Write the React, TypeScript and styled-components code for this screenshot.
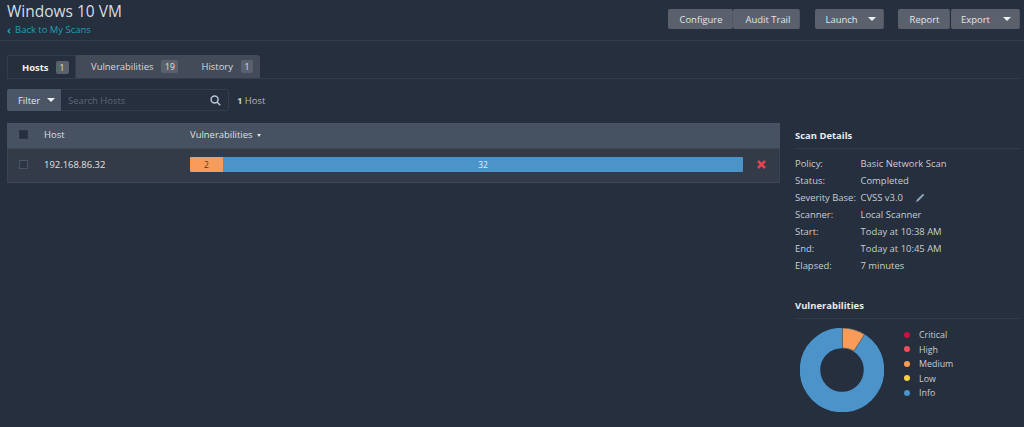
import React from "react";
import styled, { createGlobalStyle } from "styled-components";

const Global = createGlobalStyle`
  html, body { margin: 0; padding: 0; background: #252f3e; }
  body { font-family: "Open Sans", "Liberation Sans", sans-serif; color: #d5d9de; font-size: 9.45px; overflow: hidden; }
  * { box-sizing: border-box; }
`;
const Page = styled.div`width: 1024px; height: 427px; overflow: hidden; background: #252f3e;`;
const Header = styled.header`
  height: 41px; border-bottom: 1px solid #333d4c; padding: 0 4px 0 7px;
  display: flex; justify-content: space-between; align-items: flex-start;
`;
const TitleBlock = styled.div`display: flex; flex-direction: column;`;
const Title = styled.h1`margin: 0; font-size: 15.5px; font-weight: 400; line-height: 23px; color: #d8dce0;`;
const Back = styled.a`font-size: 9.45px; line-height: 14px; color: #1f9fb5; display: flex; align-items: center; gap: 4px;`;
const BackArrow = styled.span`font-weight: 700; font-size: 11px; line-height: 12px;`;
const Actions = styled.div`display: flex; margin-top: 9px; gap: 15px;`;
const Group = styled.div<{ $gap?: number }>`display: flex; gap: ${p => p.$gap ?? 0}px; &:last-child { margin-left: -1px; }`;
const Btn = styled.button<{ $w: number; $pl?: number; $gap?: number }>`
  width: ${p => p.$w}px; height: 20px; border: 0; padding: 0 0 0 ${p => p.$pl ?? 0}px; background: #5a606c; color: #e3e5e8;
  font: 400 9.45px "Open Sans", sans-serif; display: flex; align-items: center; justify-content: center; gap: ${p => p.$gap ?? 9}px;
  border-right: 1px solid #505662; border-radius: 2px;
`;
const Caret = styled.i`width: 0; height: 0; border: 4px solid transparent; border-top: 4px solid #eef0f2; border-bottom: 0; display: block;`;
const Main = styled.div`padding: 14px 4px 0 7px; display: flex; flex-direction: column;`;
const Tabs = styled.div`display: flex; height: 24px; border-bottom: 1px solid #333d4c; width: 1013px;`;
const Tab = styled.div<{ $w: number }>`
  width: ${p => p.$w}px; height: 23px; display: flex; align-items: center; gap: 7px; padding-left: 14px;
  background: #252f3e; font-weight: 700; color: #f0f1f3;
  border: 1px solid #333d4c; border-bottom: 0; border-radius: 2px 0 0 0;
`;
const TabRest = styled.div`
  width: 184px; height: 23px; background: #444b58; display: flex; align-items: center; padding-left: 15px; border-radius: 0 3px 0 0; color: #d5d9de;
`;
const TabLabel = styled.span<{ $ml?: number }>`margin-left: ${p => p.$ml ?? 0}px;`;
const Badge = styled.span<{ $w: number; $ml?: number }>`
  width: ${p => p.$w}px; height: 13px; margin-left: ${p => p.$ml ?? 0}px; background: #5a606c; border-radius: 2px; font-size: 8.5px; font-weight: 400;
  display: flex; align-items: center; justify-content: center; color: #dfe1e4;
`;
const FilterRow = styled.div`display: flex; align-items: center; margin-top: 10px; height: 22px;`;
const FilterBox = styled.div`
  display: flex; width: 222px; height: 22px; border: 1px solid #333d4c; border-radius: 2px; align-items: stretch;
`;
const FilterBtn = styled.div`
  width: 54px; background: #4a5666; color: #e2e5e8; display: flex; align-items: center; gap: 7px; padding-left: 11px; margin: -1px 0 -1px -1px; border-radius: 2px 0 0 2px;
`;
const Search = styled.div`
  flex: 1; display: flex; align-items: center; justify-content: space-between; padding: 0 7px 0 7px; color: #5f6874;
`;
const Count = styled.div`margin-left: 8px; color: #b3b8bf; b { color: #c6cace; }`;
const Body = styled.div`display: flex; margin-top: 12px; align-items: flex-start;`;
const Table = styled.div`width: 773px; border-bottom: 1px solid #3d4857;`;
const HeadRow = styled.div`
  height: 26px; background: #465261; border-bottom: 1px solid #3d4857; display: flex; align-items: center; color: #dde0e3; padding-bottom: 2px;
`;
const Row = styled.div`height: 33px; background: #333b49; display: flex; align-items: center; border-left: 1px solid #3a4453; border-right: 1px solid #3a4453; color: #e0e3e6; padding-bottom: 3px;`;
const Check = styled.span<{ $dark?: boolean }>`
  width: 9px; height: 9px; margin-left: ${p => p.$dark ? 12 : 11}px; display: block; flex: none; background: ${p => p.$dark ? "#252f3e" : "#2c3544"}; border: 1px solid ${p => p.$dark ? "#2c3544" : "#4a5463"};
`;
const HostCell = styled.div`width: 146px; margin-left: 16px; flex: none;`;
const SortCaret = styled.i`display: inline-block; margin-left: 5px; vertical-align: 1px; width: 0; height: 0; border: 2.5px solid transparent; border-top: 3px solid #e0e3e6; border-bottom: 0;`;
const Bar = styled.div`width: 553px; height: 15px; display: flex; border-radius: 1px; overflow: hidden; flex: none; font-size: 8.5px;`;
const Seg = styled.div<{ $c: string; $w: number; $fg: string }>`
  width: ${p => p.$w}px; background: ${p => p.$c}; color: ${p => p.$fg}; display: flex; align-items: center; justify-content: center;
`;
const RemoveCell = styled.div`margin-left: 14px; display: flex;`;
const Side = styled.aside`width: 225px; margin-left: 15px; display: flex; flex-direction: column;`;
const SideTitle = styled.h2`
  margin: 0; font-size: 9.45px; font-weight: 700; line-height: 14px; height: 26px; padding-top: 6px; color: #e9ebed; border-bottom: 1px solid #333d4c;
`;
const Details = styled.dl`margin: 6px 0 0; display: grid; grid-template-columns: 65.5px 1fr; color: #c9cdd2;`;
const Dt = styled.dt`line-height: 17px; white-space: nowrap;`;
const Dd = styled.dd`margin: 0; line-height: 17px; display: flex; align-items: center; gap: 13px;`;
const VulnSection = styled.div`margin-top: 18.6px;`;
const Chart = styled.div`display: flex; margin-top: 9px; padding-left: 5px; align-items: flex-start;`;
const Legend = styled.ul`margin: 0 0 0 20px; padding: 0; list-style: none; font-size: 8.9px; color: #c9cdd2;`;
const LegendItem = styled.li`height: 14.5px; display: flex; align-items: center; gap: 9px;`;
const Dot = styled.span<{ $c: string }>`width: 6px; height: 6px; border-radius: 50%; background: ${p => p.$c};`;

const SearchIcon = () => (
  <svg width="11" height="11" viewBox="0 0 11 11" fill="none" stroke="#b5c4d4" strokeWidth="1.5">
    <circle cx="4.6" cy="4.6" r="3.5" /><path d="M7.2 7.2 10.2 10.2" />
  </svg>
);
const Cross = () => (
  <svg width="9" height="9" viewBox="0 0 9 9" stroke="#e9434f" strokeWidth="2.5"><path d="M1 1 8 8M8 1 1 8" /></svg>
);
const Pencil = () => (
  <svg width="9" height="9" viewBox="0 0 9 9" fill="#8fa5c4"><path d="M0 9 .8 6.8 6.9.7 8.3 2.1 2.2 8.2Z" /></svg>
);
const Donut = () => (
  <svg width="84" height="84" viewBox="-42 -42 84 84">
    <circle cx="0" cy="0" r="32" fill="none" stroke="#4c93ca" strokeWidth="20.5" />
    <path d="M0.5 -42 A42 42 0 0 1 22.5 -35.5 L12 -19 A22 22 0 0 0 0.5 -22 Z" fill="#f99c5a" stroke="#3a3f42" strokeWidth="0.6" />
  </svg>
);

const details: [string, string][] = [
  ["Policy:", "Basic Network Scan"], ["Status:", "Completed"], ["Severity Base:", "CVSS v3.0"],
  ["Scanner:", "Local Scanner"], ["Start:", "Today at 10:38 AM"], ["End:", "Today at 10:45 AM"], ["Elapsed:", "7 minutes"],
];
const legend: [string, string][] = [
  ["Critical", "#c7103f"], ["High", "#f0505a"], ["Medium", "#f99c5a"], ["Low", "#f7d043"], ["Info", "#4c93ca"],
];

export default function App() {
  return (
    <Page>
      <Global />
      <Header>
        <TitleBlock>
          <Title>Windows 10 VM</Title>
          <Back><BackArrow>‹</BackArrow>Back to My Scans</Back>
        </TitleBlock>
        <Actions>
          <Group><Btn $w={65} $pl={2}>Configure</Btn><Btn $w={67} $pl={4}>Audit Trail</Btn></Group>
          <Group><Btn $w={69} $pl={3} $gap={10}>Launch<Caret /></Btn></Group>
          <Group $gap={1}><Btn $w={52} $pl={2}>Report</Btn><Btn $w={69} $pl={2} $gap={13}>Export<Caret /></Btn></Group>
        </Actions>
      </Header>
      <Main>
        <Tabs>
          <Tab $w={69}>Hosts<Badge $w={13}>1</Badge></Tab>
          <TabRest>
            Vulnerabilities<Badge $w={17} $ml={8}>19</Badge>
            <TabLabel $ml={23}>History</TabLabel><Badge $w={12} $ml={8}>1</Badge>
          </TabRest>
        </Tabs>
        <FilterRow>
          <FilterBox>
            <FilterBtn>Filter<Caret /></FilterBtn>
            <Search>Search Hosts<SearchIcon /></Search>
          </FilterBox>
          <Count><b>1</b> Host</Count>
        </FilterRow>
        <Body>
          <Table>
            <HeadRow>
              <Check $dark />
              <HostCell>Host</HostCell>
              <div>Vulnerabilities<SortCaret /></div>
            </HeadRow>
            <Row>
              <Check />
              <HostCell>192.168.86.32</HostCell>
              <Bar>
                <Seg $c="#f99c5a" $w={33} $fg="#5a3a2a">2</Seg>
                <Seg $c="#4c93ca" $w={520} $fg="#e8f0f6">32</Seg>
              </Bar>
              <RemoveCell><Cross /></RemoveCell>
            </Row>
          </Table>
          <Side>
            <SideTitle>Scan Details</SideTitle>
            <Details>
              {details.map(([k, v]) => (
                <React.Fragment key={k}>
                  <Dt>{k}</Dt>
                  <Dd>{v}{k.startsWith("Severity") && <Pencil />}</Dd>
                </React.Fragment>
              ))}
            </Details>
            <VulnSection>
              <SideTitle>Vulnerabilities</SideTitle>
              <Chart>
                <Donut />
                <Legend>
                  {legend.map(([n, c]) => (
                    <LegendItem key={n}><Dot $c={c} />{n}</LegendItem>
                  ))}
                </Legend>
              </Chart>
            </VulnSection>
          </Side>
        </Body>
      </Main>
    </Page>
  );
}
